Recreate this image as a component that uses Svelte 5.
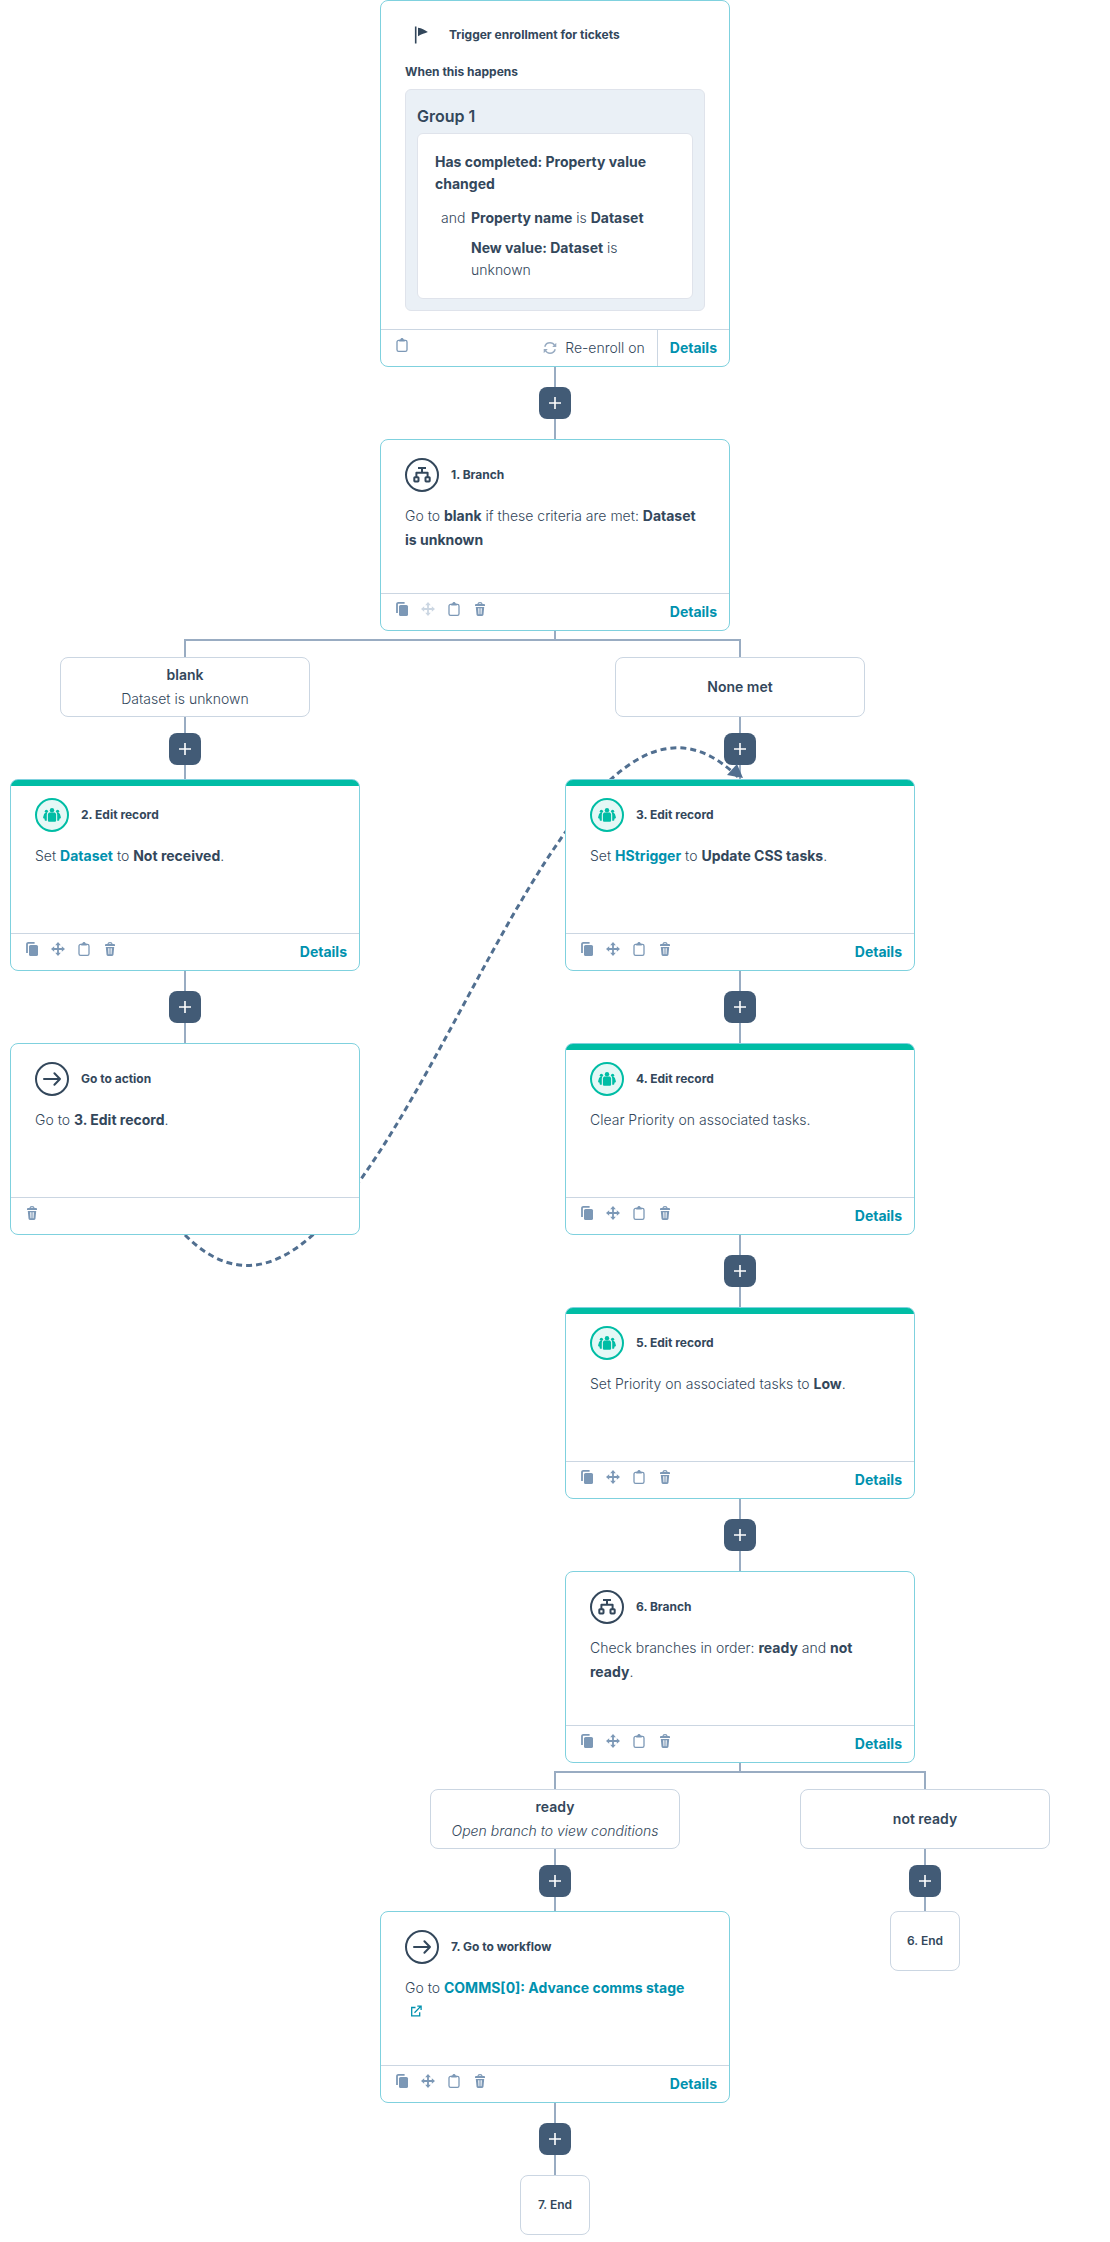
<script>
  const b = (t) => ({ t, kind: 'strong' });
  const link = (t) => ({ t, kind: 'link' });
  const p = (t) => ({ t, kind: 'plain' });

  const all = ['copy', 'move', 'clipboard', 'trash'];
  const labels = { copy: 'Clone action', move: 'Move action', clipboard: 'Copy action', trash: 'Delete action' };

  const root = {
    type: 'trigger',
    next: {
      type: 'card', icon: 'branch', title: '1. Branch', tools: all, disabled: 'move', details: true,
      text: [p('Go to '), b('blank'), p(' if these criteria are met: '), b('Dataset is unknown')],
      branches: [
        {
          name: 'blank', note: 'Dataset is unknown',
          next: {
            type: 'card', icon: 'people', title: '2. Edit record', tools: all, details: true,
            text: [p('Set '), link('Dataset'), p(' to '), b('Not received'), p('.')],
            next: {
              type: 'card', icon: 'arrow', title: 'Go to action', tools: ['trash'],
              text: [p('Go to '), b('3. Edit record'), p('.')]
            }
          }
        },
        {
          name: 'None met',
          next: {
            type: 'card', icon: 'people', title: '3. Edit record', tools: all, details: true,
            text: [p('Set '), link('HStrigger'), p(' to '), b('Update CSS tasks'), p('.')],
            next: {
              type: 'card', icon: 'people', title: '4. Edit record', tools: all, details: true,
              text: [p('Clear Priority on associated tasks.')],
              next: {
                type: 'card', icon: 'people', title: '5. Edit record', tools: all, details: true,
                text: [p('Set Priority on associated tasks to '), b('Low'), p('.')],
                next: {
                  type: 'card', icon: 'branch', title: '6. Branch', tools: all, details: true,
                  text: [p('Check branches in order: '), b('ready'), p(' and '), b('not ready'), p('.')],
                  branches: [
                    {
                      name: 'ready', note: 'Open branch to view conditions', italic: true,
                      next: {
                        type: 'card', icon: 'arrow', title: '7. Go to workflow', tools: all, details: true,
                        text: [p('Go to '), link('COMMS[0]: Advance comms stage')],
                        external: true,
                        next: { type: 'end', title: '7. End' }
                      }
                    },
                    { name: 'not ready', next: { type: 'end', title: '6. End' } }
                  ]
                }
              }
            }
          }
        }
      ]
    }
  };
</script>

{#snippet glyph(name)}
  {#if name === 'copy'}
    <svg width="14" height="14" viewBox="0 0 14 14" aria-hidden="true">
      <path d="M2 11V2.2C2 1.3 2.6.9 3.3.9H9.6" fill="none" stroke="currentColor" stroke-width="1.8" />
      <rect x="4" y="3" width="9" height="11" rx="1.6" fill="currentColor" />
    </svg>
  {:else if name === 'move'}
    <svg width="14" height="14" viewBox="0 0 14 14" aria-hidden="true">
      <path d="M7 2v10M2 7h10" fill="none" stroke="currentColor" stroke-width="1.8" />
      <path d="M7 0l2.8 3.2H4.2zM7 14l2.8-3.2H4.2zM0 7l3.2-2.8v5.6zM14 7l-3.2-2.8v5.6z" fill="currentColor" />
    </svg>
  {:else if name === 'clipboard'}
    <svg width="14" height="14" viewBox="0 0 14 14" aria-hidden="true">
      <rect x="2" y="2.4" width="10" height="10.9" rx="1.6" fill="none" stroke="currentColor" stroke-width="1.3" />
      <path d="M4.2 3.6V2.4C4.2 1.8 4.7 1.5 5.4 1.4 5.6.6 6.2 0 7 0s1.4.6 1.6 1.4c.7.1 1.2.4 1.2 1v1.2z" fill="currentColor" />
    </svg>
  {:else if name === 'trash'}
    <svg width="14" height="14" viewBox="0 0 14 14" aria-hidden="true">
      <path d="M4.9 2.2C5 .9 5.8.7 7 .7s2 .2 2.1 1.5" fill="none" stroke="currentColor" stroke-width="1.2" />
      <path d="M2 3.2C2 2.5 2.4 2 3.2 2h7.6c.8 0 1.2.5 1.2 1.2V4H2z" fill="currentColor" />
      <path fill-rule="evenodd" d="M2.8 5h8.4l-.7 7.6c-.1.9-.6 1.4-1.4 1.4H4.9c-.8 0-1.3-.5-1.4-1.4zM5.2 6.2l.3 6h.9v-6zM7.6 6.2v6h.9l.3-6z" fill="currentColor" />
    </svg>
  {:else if name === 'branch'}
    <svg width="20" height="20" viewBox="0 0 20 20" aria-hidden="true">
      <g fill="none" stroke="currentColor" stroke-width="2">
        <path d="M6 3h8M10 3v4.6M4.4 12V7.8h11.2V12" stroke-linejoin="round" />
        <rect x="2.3" y="12.2" width="4.2" height="4.2" rx=".6" />
        <rect x="13.5" y="12.2" width="4.2" height="4.2" rx=".6" />
      </g>
    </svg>
  {:else if name === 'arrow'}
    <svg width="20" height="20" viewBox="0 0 20 20" aria-hidden="true">
      <path d="M2 10h16M12.4 4.3L18 10l-5.6 5.7" fill="none" stroke="currentColor" stroke-width="2" stroke-linecap="round" stroke-linejoin="round" />
    </svg>
  {:else if name === 'people'}
    <svg width="20" height="20" viewBox="0 0 20 20" aria-hidden="true">
      <g fill="currentColor">
        <circle cx="10" cy="5.2" r="2.2" />
        <path d="M5.9 9.6C5.9 8 7 7.4 8.2 7.4h3.6c1.2 0 2.3.6 2.3 2.2v5.6c0 1-.6 1.6-1.5 1.6H7.4c-.9 0-1.5-.6-1.5-1.6z" />
        <circle cx="4.4" cy="6.3" r="1.6" />
        <circle cx="15.6" cy="6.3" r="1.6" />
        <path d="M5.2 8.1c-.3.6-.4 1.2-.4 2v5.7h-1C3 15.8 2.6 15.2 2.6 14.5v-.8C1.5 13.6 1 13 1.1 12.2L2 9.3C2.3 8.3 3 7.9 4 7.9c.5 0 .9 0 1.2.2zM14.8 8.1c.3.6.4 1.2.4 2v5.7h1c.8 0 1.2-.6 1.2-1.3v-.8c1.1-.1 1.600-.7 1.500-1.500L18 9.300c-.3-1-1-1.400-2-1.400-.5 0-.9 0-1.200.2z" />
      </g>
    </svg>
  {/if}
{/snippet}

{#snippet toolbar(names, disabled)}
  <div class="tools">
    {#each names as name}
      <button class="tool" type="button" aria-label={labels[name]} disabled={name === disabled}>{@render glyph(name)}</button>
    {/each}
  </div>
{/snippet}

{#snippet triggerCard()}
  <section class="card">
    <div class="body trigger">
      <header class="trigger-head">
        <svg class="flag" width="20" height="20" viewBox="0 0 20 20" aria-hidden="true">
          <path d="M3.7 1.5v17" stroke="currentColor" stroke-width="1.6" fill="none" />
          <path d="M6 2.700c4 .4 6.200 2.300 9.900 4.200-3.300 1.700-6.200 1.800-9.900 4.300z" fill="currentColor" />
        </svg>
        <h2 class="title">Trigger enrollment for tickets</h2>
      </header>
      <h3 class="title when">When this happens</h3>
      <div class="group">
        <h4 class="group-name">Group 1</h4>
        <div class="filters">
          <p><strong>Has completed: Property value changed</strong></p>
          <div class="refine">
            <span class="and">and</span>
            <div class="conditions">
              <p><strong>Property name</strong> is <strong>Dataset</strong></p>
              <p><strong>New value: Dataset</strong> is<br />unknown</p>
            </div>
          </div>
        </div>
      </div>
    </div>
    <footer class="foot">
      {@render toolbar(['clipboard'])}
      <div class="reenroll">
        <svg width="14" height="14" viewBox="0 0 14 14" aria-hidden="true">
          <g fill="none" stroke="currentColor" stroke-width="1.5">
            <path d="M1.8 5.7C2.5 3.3 4.6 1.8 7 1.8c2 0 3.7 1 4.6 2.7" />
            <path d="M12.2 8.3c-.7 2.4-2.8 3.9-5.2 3.9-2 0-3.7-1-4.6-2.7" />
          </g>
          <path d="M13.3 1.8v4.1H9.2zM.7 12.2V8.1h4.1z" fill="currentColor" />
        </svg>
        <span>Re-enroll on</span>
      </div>
      <div class="split"><a class="details" href="#details">Details</a></div>
    </footer>
  </section>
{/snippet}

{#snippet actionCard(node)}
  <section class="card" class:edit={node.icon === 'people'}>
    <div class="body">
      <header class="head">
        <span class="badge" class:green={node.icon === 'people'}>{@render glyph(node.icon)}</span>
        <h2 class="title">{node.title}</h2>
      </header>
      <p class="text">
        {#each node.text as part}{#if part.kind === 'strong'}<strong>{part.t}</strong>{:else if part.kind === 'link'}<a href="#open">{part.t}</a>{:else}{part.t}{/if}{/each}
      </p>
      {#if node.external}
        <a class="external" href="#open" aria-label="Open workflow in a new tab">
          <svg width="12" height="12" viewBox="0 0 12 12" aria-hidden="true">
            <g fill="none" stroke="currentColor" stroke-width="1.3">
              <path d="M5.5 2.5H1.7v8.3h8V7.2" />
              <path d="M4.5 7.7L10.7 1.4M7.3 1.1h3.8v3.8" />
            </g>
          </svg>
        </a>
      {/if}
    </div>
    <footer class="foot">
      {@render toolbar(node.tools, node.disabled)}
      {#if node.details}<a class="details" href="#details">Details</a>{/if}
    </footer>
  </section>
{/snippet}

{#snippet connector(short)}
  <div class="connector" class:short>
    <button class="add" type="button" aria-label="Add action">
      <svg width="12" height="12" viewBox="0 0 12 12" aria-hidden="true">
        <path d="M6 0v12M0 6h12" stroke="currentColor" stroke-width="1.6" fill="none" />
      </svg>
    </button>
  </div>
{/snippet}

{#snippet flow(node)}
  {#if node.type === 'trigger'}
    {@render triggerCard()}
  {:else if node.type === 'end'}
    <div class="end">{node.title}</div>
  {:else}
    {@render actionCard(node)}
  {/if}

  {#if node.next}
    {@render connector(false)}
    {@render flow(node.next)}
  {/if}

  {#if node.branches}
    <div class="stub"></div>
    <div class="branches">
      {#each node.branches as branch}
        <div class="column">
          <div class="arm"><i></i><i></i><i></i></div>
          <div class="condition">
            <strong>{branch.name}</strong>
            {#if branch.note}<span class:italic={branch.italic}>{branch.note}</span>{/if}
          </div>
          {@render connector(true)}
          {@render flow(branch.next)}
        </div>
      {/each}
    </div>
  {/if}
{/snippet}

<main>
  <div class="canvas">
    {@render flow(root)}
    <svg class="jump" width="1110" height="1300" viewBox="0 0 1110 1300" aria-hidden="true">
      <path d="M185 1235C385 1435 540 579 739 778" fill="none" stroke="#516f90" stroke-width="3" stroke-dasharray="6 4" />
      <path d="M737 764L743 778L727 775Z" fill="#516f90" />
    </svg>
  </div>
</main>

<style>
  :global(body) {
    margin: 0;
    background: #fff;
  }
  main {
    font-family: Inter, 'Open Sans', sans-serif;
    font-size: 14px;
    font-weight: 300;
    line-height: 24px;
    color: #33475b;
    padding-bottom: 7px;
  }
  .canvas {
    position: relative;
    width: max-content;
    margin: 0 auto;
    display: flex;
    flex-direction: column;
    align-items: center;
  }
  .jump {
    position: absolute;
    top: 0;
    left: 0;
    z-index: 1;
    pointer-events: none;
  }
  h2, h3, h4, p {
    margin: 0;
  }
  strong, a {
    font-weight: 700;
  }
  a {
    color: #0091ae;
    text-decoration: none;
  }
  .card {
    position: relative;
    z-index: 2;
    box-sizing: border-box;
    width: 350px;
    margin: 0 10px;
    border: 1px solid #7fd1de;
    border-radius: 8px;
    background: #fff;
    overflow: hidden;
  }
  .card.edit {
    background: linear-gradient(#00bda5, #00bda5) top / 100% 6px no-repeat #fff;
  }
  .body {
    min-height: 153px;
    box-sizing: border-box;
    padding: 18px 24px;
  }
  .head {
    display: flex;
    align-items: center;
    gap: 12px;
    margin-bottom: 12px;
  }
  .badge {
    box-sizing: border-box;
    width: 34px;
    height: 34px;
    border: 2px solid #33475b;
    border-radius: 50%;
    display: grid;
    place-items: center;
    color: #33475b;
  }
  .badge.green {
    border-color: #00bda5;
    background: #e5f8f6;
    color: #00bda5;
  }
  svg {
    display: block;
  }
  .title {
    font-size: 12px;
    font-weight: 700;
    line-height: 18px;
  }
  .external {
    display: block;
    width: 12px;
    margin: 5px;
  }
  .foot {
    display: flex;
    align-items: stretch;
    height: 36px;
    border-top: 1px solid #cbd6e2;
  }
  .tools {
    display: flex;
    gap: 12px;
    padding: 8px 14px;
    margin-right: auto;
  }
  .tool {
    width: 14px;
    height: 14px;
    padding: 0;
    border: 0;
    background: none;
    color: #7c98b6;
  }
  .tool:disabled {
    color: #cbd6e2;
  }
  .details {
    padding: 0 12px;
    line-height: 36px;
  }
  .split {
    display: flex;
    border-left: 1px solid #cbd6e2;
  }
  .reenroll {
    display: flex;
    align-items: center;
    gap: 8px;
    padding: 0 12px;
  }
  .reenroll svg {
    color: #99acc2;
  }
  .trigger {
    padding: 24px 24px 18px;
  }
  .trigger-head {
    display: flex;
    align-items: center;
    gap: 17px;
    padding-left: 7px;
  }
  .when {
    margin: 18px 0 8px;
  }
  .group {
    border: 1px solid #dfe3eb;
    border-radius: 6px;
    background: #eaf0f6;
    padding: 14px 11px 11px;
  }
  .group-name {
    font-size: 16px;
    font-weight: 600;
    line-height: 24px;
    margin-bottom: 5px;
  }
  .filters {
    border: 1px solid #dfe3eb;
    border-radius: 6px;
    background: #fff;
    padding: 17px;
    line-height: 22px;
  }
  .refine {
    display: grid;
    grid-template-columns: 24px 1fr;
    column-gap: 6px;
    padding: 12px 0 0 6px;
  }
  .conditions {
    display: grid;
    gap: 8px;
  }
  .connector {
    position: relative;
    width: 32px;
    padding: 20px 0;
    background: linear-gradient(#99acc2, #99acc2) center / 2px 100% no-repeat;
  }
  .connector.short {
    padding: 16px 0 14px;
  }
  .add {
    display: grid;
    place-items: center;
    width: 32px;
    height: 32px;
    padding: 0;
    border: 0;
    border-radius: 8px;
    background: #425b76;
    color: #fff;
  }
  .stub {
    width: 2px;
    height: 8px;
    background: #99acc2;
  }
  .branches {
    display: flex;
    align-items: flex-start;
  }
  .column {
    display: flex;
    flex-direction: column;
    align-items: center;
    min-width: 370px;
  }
  .arm {
    align-self: stretch;
    display: grid;
    grid-template-columns: 1fr 2px 1fr;
    height: 18px;
  }
  .arm i {
    height: 2px;
    background: #99acc2;
  }
  .arm i:nth-child(2) {
    height: 18px;
  }
  .column:first-child > .arm i:first-child,
  .column:last-child > .arm i:last-child {
    background: none;
  }
  .condition {
    box-sizing: border-box;
    width: 250px;
    height: 60px;
    border: 1px solid #cbd6e2;
    border-radius: 8px;
    background: #fff;
    display: flex;
    flex-direction: column;
    align-items: center;
    justify-content: center;
  }
  .condition strong {
    font-weight: 600;
  }
  .italic {
    font-style: italic;
  }
  .end {
    box-sizing: border-box;
    width: 70px;
    height: 60px;
    border: 1px solid #cbd6e2;
    border-radius: 8px;
    background: #fff;
    display: grid;
    place-items: center;
    font-size: 12px;
    font-weight: 600;
  }
</style>
